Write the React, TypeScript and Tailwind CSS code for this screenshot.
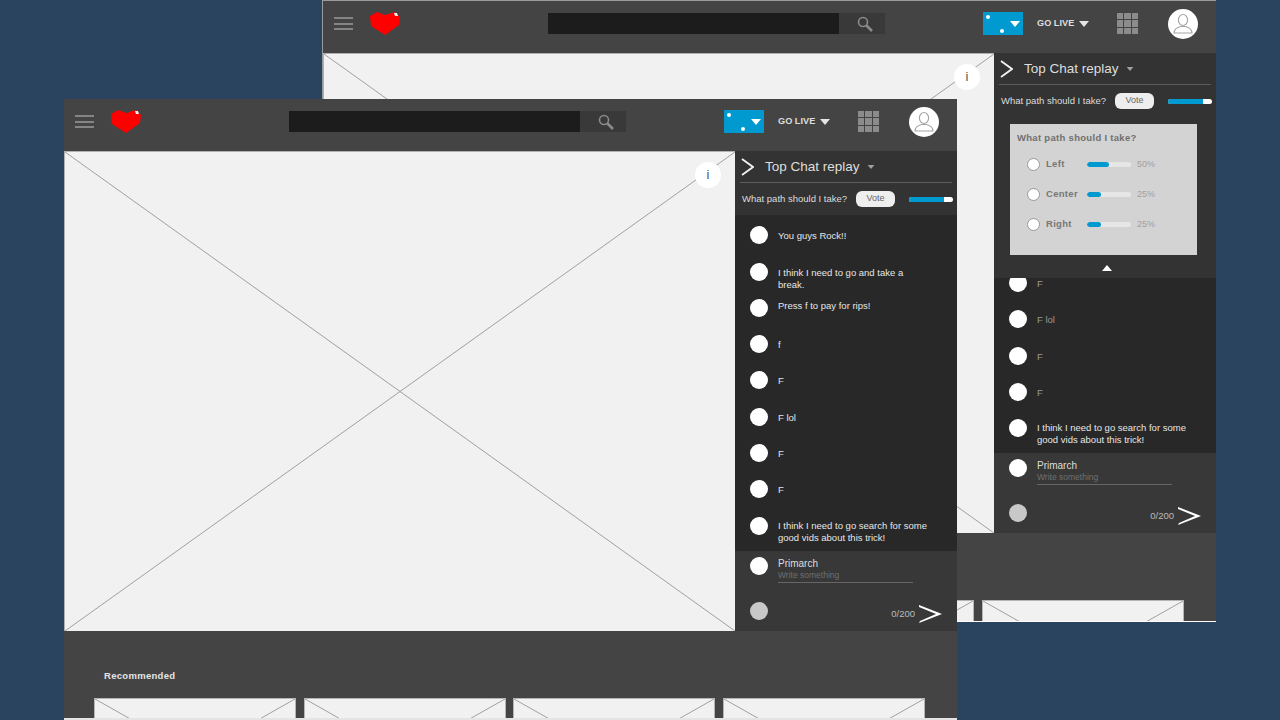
const Placeholder = () => (
  <svg className="absolute inset-0 h-full w-full" viewBox="0 0 100 100" preserveAspectRatio="none">
    <line x1="0" y1="0" x2="100" y2="100" stroke="#a0a0a0" strokeWidth="1" vectorEffect="non-scaling-stroke" />
    <line x1="100" y1="0" x2="0" y2="100" stroke="#a0a0a0" strokeWidth="1" vectorEffect="non-scaling-stroke" />
  </svg>
);

const Caret = ({ className }: { className: string }) => (
  <svg className={className} viewBox="0 0 10 6">
    <path d="M0 0h10L5 6z" fill="currentColor" />
  </svg>
);

const Dot = ({ gray }: { gray?: boolean }) => (
  <div className={`h-[18px] w-[18px] shrink-0 rounded-full ${gray ? "bg-[#c8c8c8]" : "bg-white"}`} />
);

const Header = () => (
  <header className="flex h-[52px] shrink-0 items-center bg-[#444444] pb-[7px] pl-[11px]">
    <div className="flex w-[19px] flex-col gap-[3.5px]">
      <div className="h-[2px] bg-[#858585]" />
      <div className="h-[2px] bg-[#858585]" />
      <div className="h-[2px] bg-[#858585]" />
    </div>
    <svg className="ml-[17px] h-[23px] w-[30px]" viewBox="0 0 30 23">
      <path d="M7 0l8 3 10-3 5 5-1 8-14 10L1 14 0 4z" fill="#ff0000" />
      <path d="M24 1l3 0 1 3-3 0z" fill="#eeeeee" />
    </svg>
    <div className="ml-[148px] h-[21px] w-[291px] bg-[#1c1c1c]" />
    <div className="flex h-[21px] w-[46px] items-center justify-center bg-[#393939]">
      <svg className="ml-[6px] h-[16px] w-[16px]" viewBox="0 0 16 16" fill="none" stroke="#8a8a8a">
        <circle cx="6" cy="6" r="4.5" strokeWidth="1.6" />
        <path d="M9.5 9.5L15 15" strokeWidth="2.6" />
      </svg>
    </div>
    <div className="relative ml-[98px] h-[23px] w-[40px] bg-[#0099d0]">
      <div className="absolute left-[3px] top-[3px] h-[4px] w-[4px] rounded-full bg-white" />
      <div className="absolute left-[17px] top-[17px] h-[4px] w-[4px] rounded-full bg-white" />
      <Caret className="absolute left-[27px] top-[9px] h-[6px] w-[10px] text-white" />
    </div>
    <span className="ml-[14px] w-[41px] text-[9.2px] font-bold whitespace-nowrap text-[#dddddd]">GO LIVE</span>
    <Caret className="ml-[1px] h-[6px] w-[10px] text-[#e5e5e5]" />
    <div className="ml-[28px] grid h-[21px] w-[21px] grid-cols-3 gap-[1px]">
      {Array.from({ length: 9 }).map((_, i) => (
        <div key={i} className="bg-[#8c8c8c]" />
      ))}
    </div>
    <div className="ml-[30px] flex h-[30px] w-[30px] items-center justify-center rounded-full bg-white">
      <svg className="h-[24px] w-[24px]" viewBox="0 0 24 24" fill="none" stroke="#a5a5a5" strokeWidth="1.2">
        <ellipse cx="12" cy="8" rx="4.6" ry="5.5" />
        <path d="M3 21c0-4 3-5.5 6.5-6.5h5C18 15.500 21 17 21 21z" />
      </svg>
    </div>
  </header>
);

const Message = ({
  text,
  dim,
  top = "mt-[4px]",
}: {
  text: React.ReactNode;
  dim?: boolean;
  top?: string;
}) => (
  <div className="flex h-[36.3px] shrink-0 items-start pl-[15px]">
    <Dot />
    <p className={`ml-[10px] w-[160px] text-[9.5px] leading-[12px] ${top} ${dim ? "text-[#999999]" : "text-[#e6e6e6]"}`}>
      {text}
    </p>
  </div>
);

const ChatTop = ({ children }: { children?: React.ReactNode }) => (
  <div className="shrink-0 bg-[#333333]">
    <div className="mx-[5px] flex h-[32px] items-center border-b border-[#5c5c5c] pl-[1px]">
      <svg className="h-[18px] w-[13px]" viewBox="0 0 13 18" fill="none" stroke="#f2f2f2" strokeWidth="1.8">
        <path d="M1 1l11 8L1 17" />
      </svg>
      <span className="ml-[11px] mt-[2px] text-[13.5px] text-[#dedede]">Top Chat replay</span>
      <Caret className="ml-[7px] h-[4px] w-[8px] text-[#a0a0a0]" />
    </div>
    <div className="flex h-[32px] items-center pl-[7px]">
      <span className="w-[114px] text-[9.5px] whitespace-nowrap text-[#dddddd]">What path should I take?</span>
      <div className="flex h-[16px] w-[39px] items-center justify-center rounded-md bg-[#eeeeee] text-[9px] text-[#666666]">
        Vote
      </div>
      <div className="ml-[14px] h-[5px] w-[44px] overflow-hidden rounded-full bg-white">
        <div className="h-full w-[35px] bg-[#0099d0]" />
      </div>
    </div>
    {children}
  </div>
);

const PollRow = ({ label, fill, pct }: { label: string; fill: string; pct: string }) => (
  <div className="flex h-[30px] items-center pl-[17px]">
    <div className="h-[13px] w-[13px] shrink-0 rounded-full border border-[#999999] bg-white" />
    <span className="ml-[6px] w-[41px] text-[9.5px] font-bold tracking-[0.3px] text-[#777777]">{label}</span>
    <div className="h-[5px] w-[44px] overflow-hidden rounded-full bg-[#e6e6e6]">
      <div className={`h-full rounded-full bg-[#0099d0] ${fill}`} />
    </div>
    <span className="ml-[6px] text-[9px] text-[#a0a0a0]">{pct}</span>
  </div>
);

const Poll = () => (
  <div className="pt-[7px]">
    <div className="ml-[16px] mr-[19px] h-[131px] bg-[#d3d3d3] pl-[7px] pt-[7px]">
      <p className="text-[9.5px] font-bold tracking-[0.3px] text-[#707070]">What path should I take?</p>
      <div className="-ml-[7px] mt-[4px]">
        <PollRow label="Left" fill="w-[22px]" pct="50%" />
        <PollRow label="Center" fill="w-[14px]" pct="25%" />
        <PollRow label="Right" fill="w-[14px]" pct="25%" />
      </div>
    </div>
  </div>
);

const ChatInput = () => (
  <div className="h-[80px] shrink-0 bg-[#383838] pl-[15px] pt-[6px]">
    <div className="flex items-start">
      <Dot />
      <div className="ml-[10px] mt-[1px] w-[135px] border-b border-[#666666] pb-[1px]">
        <p className="text-[10px] leading-[12px] text-[#dddddd]">Primarch</p>
        <p className="text-[8.5px] leading-[11px] text-[#6f6f6f]">Write something</p>
      </div>
    </div>
    <div className="mt-[19px] flex items-start pr-[15px]">
      <Dot gray />
      <span className="ml-auto mt-[5px] text-[9.5px] text-[#bbbbbb]">0/200</span>
      <svg className="ml-[4px] mt-[3px] h-[18px] w-[23px]" viewBox="0 0 23 18">
        <path d="M0 0l23 9L0 18l1-2 16-7L0 2z" fill="#ffffff" />
      </svg>
    </div>
  </div>
);

const Thumb = () => (
  <div className="relative h-[60px] w-[202px] shrink-0 border border-[#b5b5b5] bg-[#f1f1f1]">
    <svg className="absolute inset-0 h-[113px] w-full" viewBox="0 0 100 100" preserveAspectRatio="none">
      <line x1="0" y1="0" x2="100" y2="100" stroke="#a0a0a0" vectorEffect="non-scaling-stroke" />
      <line x1="100" y1="0" x2="0" y2="100" stroke="#a0a0a0" vectorEffect="non-scaling-stroke" />
    </svg>
  </div>
);

const Body = ({ chat }: { chat: React.ReactNode }) => (
  <>
    <Header />
    <div className="flex h-[480px] shrink-0">
      <div className="relative w-[671px] border-t border-l border-[#b0b0b0] bg-[#f1f1f1]">
        <Placeholder />
        <div className="absolute left-[630px] top-[10px] flex h-[26px] w-[26px] items-center justify-center rounded-full bg-white text-[13px] text-[#555555]">
          i
        </div>
      </div>
      <div className="flex w-[222px] flex-col">{chat}</div>
    </div>
    <div className="flex-1 overflow-hidden bg-[#444444]">
      <p className="ml-[40px] mt-[39px] text-[9.5px] leading-[12px] font-bold tracking-[0.3px] text-[#e5e5e5]">Recommended</p>
      <div className="ml-[30px] mt-[16px] flex gap-[7.500px]">
        <Thumb />
        <Thumb />
        <Thumb />
        <Thumb />
      </div>
    </div>
  </>
);

export default function App() {
  return (
    <div className="relative h-[720px] w-[1280px] overflow-hidden bg-[#2a4460] font-['Liberation_Sans',Arial,sans-serif]">
      {/* back window */}
      <div className="absolute left-[322px] top-0 flex h-[622px] w-[894px] flex-col border-t border-b border-l border-t-[#999999] border-b-white border-l-[#999999]">
        <Body
          chat={
            <>
              <ChatTop>
                <Poll />
                <div className="flex h-[23px] items-center justify-center pl-[4px] pt-[3px]">
                  <Caret className="h-[6px] w-[10px] rotate-180 text-white" />
                </div>
              </ChatTop>
              <div className="flex-1 overflow-hidden bg-[#282828]">
                <div className="-mt-[4px]">
                  <Message text="F" dim />
                  <Message text="F lol" dim />
                  <Message text="F" dim />
                  <Message text="F" dim />
                  <Message text="I think I need to go search for some good vids about this trick!" top="mt-[3px]" />
                </div>
              </div>
              <ChatInput />
            </>
          }
        />
      </div>

      {/* front window */}
      <div className="absolute left-[64px] top-[99px] flex h-[621px] w-[893px] flex-col border-b-2 border-[#e4e4e4]">
        <Body
          chat={
            <>
              <ChatTop />
              <div className="flex-1 overflow-hidden bg-[#282828] pt-[11.300px]">
                <Message text="You guys Rock!!" />
                <Message
                  text={
                    <>
                      I think I need to go and take a
                      <br />
                      break.
                    </>
                  }
                />
                <Message text="Press f to pay for rips!" top="mt-[1px]" />
                <Message text="f" />
                <Message text="F" />
                <Message text="F lol" />
                <Message text="F" />
                <Message text="F" />
                <Message text="I think I need to go search for some good vids about this trick!" top="mt-[3px]" />
              </div>
              <ChatInput />
            </>
          }
        />
      </div>
    </div>
  );
}
